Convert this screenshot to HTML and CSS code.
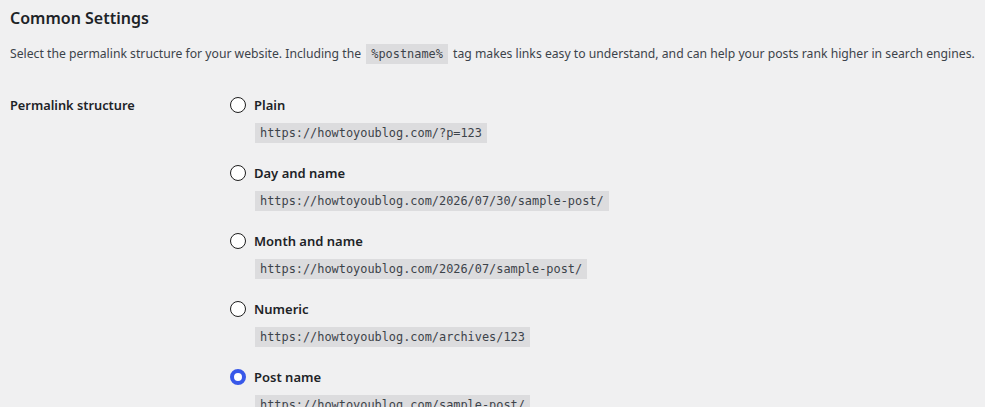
FILE: index.html
```html
<!DOCTYPE html>
<html lang="en">
<head>
    <meta charset="UTF-8">
    <title>Permalink Settings</title>
    <link rel="stylesheet" href="styles.css">
</head>
<body>

<div class="wrap">
    <h2 class="section-title">Common Settings</h2>
    <p class="description">
        Select the permalink structure for your website. Including the <code>%postname%</code> tag makes links easy to understand, and can help your posts rank higher in search engines.
    </p>

    <div class="form-row">
        <div class="form-label">Permalink structure</div>
        <div class="form-field">
            <div class="option">
                <label class="option-label"><span class="radio"></span>Plain</label>
                <code>https://howtoyoublog.com/?p=123</code>
            </div>
            <div class="option">
                <label class="option-label"><span class="radio"></span>Day and name</label>
                <code>https://howtoyoublog.com/2026/07/30/sample-post/</code>
            </div>
            <div class="option">
                <label class="option-label"><span class="radio"></span>Month and name</label>
                <code>https://howtoyoublog.com/2026/07/sample-post/</code>
            </div>
            <div class="option">
                <label class="option-label"><span class="radio"></span>Numeric</label>
                <code>https://howtoyoublog.com/archives/123</code>
            </div>
            <div class="option">
                <label class="option-label"><span class="radio checked"></span>Post name</label>
                <code>https://howtoyoublog.com/sample-post/</code>
            </div>
        </div>
    </div>
</div>

</body>
</html>
```

FILE: styles.css
```css
body {
    margin: 0;
    background: #f0f0f1;
    color: #3c434a;
    font-family: "Noto Sans", "Open Sans", sans-serif;
    font-size: 12.2px;
    overflow: hidden;
}

.wrap {
    padding: 5px 10px 0 10px;
}

.section-title {
    margin: 0;
    font-size: 16px;
    font-weight: 600;
    line-height: 26px;
    color: #1d2327;
}

.description {
    margin: 13px 0 0 0;
    line-height: 20px;
    white-space: nowrap;
}

code {
    display: inline-block;
    padding: 0 5px;
    line-height: 20px;
    background: #dcdcde;
    font-family: "DejaVu Sans Mono", monospace;
    font-size: 11.9px;
    color: #3c434a;
}

.description code {
    margin: 0 2px;
    vertical-align: top;
}

.form-row {
    display: flex;
    margin-top: 31px;
}

.form-label {
    width: 220px;
    flex-shrink: 0;
    font-size: 12.8px;
    font-weight: 600;
    line-height: 20px;
    color: #1d2327;
}

.form-field {
    display: flex;
    flex-direction: column;
}

.option {
    display: flex;
    flex-direction: column;
    align-items: flex-start;
    height: 68px;
}

.option-label {
    display: flex;
    align-items: center;
    gap: 8px;
    font-size: 13px;
    font-weight: 600;
    line-height: 20px;
    color: #1d2327;
}

.option code {
    margin: 8px 0 0 25px;
}

.radio {
    box-sizing: border-box;
    width: 16px;
    height: 16px;
    border: 1.5px solid #1e1e1e;
    border-radius: 50%;
    background: #fff;
}

.radio.checked {
    border: 4.5px solid #3858e9;
}
```
